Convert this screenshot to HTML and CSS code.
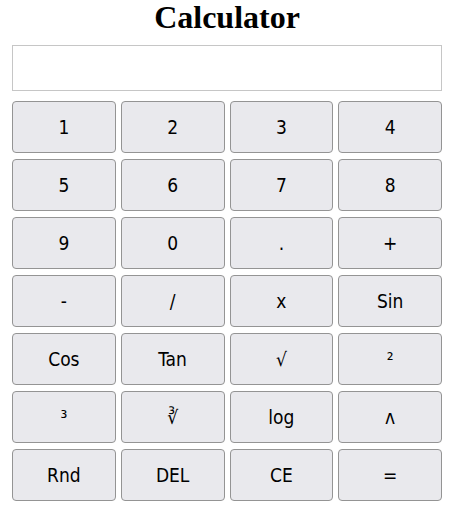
FILE: index.html
```html
<!DOCTYPE html>
<html>
<head>
<meta charset="utf-8">
<title>Calculator</title>
<link rel="stylesheet" href="styles.css">
</head>
<body>
<div class="calc">
  <h1 class="title">Calculator</h1>
  <input class="display" type="text">
  <div class="keys">
    <button class="key">1</button>
    <button class="key">2</button>
    <button class="key">3</button>
    <button class="key">4</button>
    <button class="key">5</button>
    <button class="key">6</button>
    <button class="key">7</button>
    <button class="key">8</button>
    <button class="key">9</button>
    <button class="key">0</button>
    <button class="key">.</button>
    <button class="key">+</button>
    <button class="key">-</button>
    <button class="key">/</button>
    <button class="key">x</button>
    <button class="key">Sin</button>
    <button class="key">Cos</button>
    <button class="key">Tan</button>
    <button class="key">√</button>
    <button class="key">²</button>
    <button class="key">³</button>
    <button class="key">∛</button>
    <button class="key">log</button>
    <button class="key">ʌ</button>
    <button class="key">Rnd</button>
    <button class="key">DEL</button>
    <button class="key">CE</button>
    <button class="key">=</button>
  </div>
</div>
</body>
</html>
```
FILE: styles.css
```css
html, body {
  margin: 0;
  padding: 0;
  background: #ffffff;
}

.calc {
  width: 430px;
  margin-left: 12px;
  padding-top: 1px;
}

.title {
  margin: 0;
  font-family: "Liberation Serif", "Times New Roman", serif;
  font-size: 32px;
  font-weight: bold;
  line-height: 32px;
  text-align: center;
  color: #000;
}

.display {
  display: block;
  box-sizing: border-box;
  width: 100%;
  height: 46px;
  margin: 12px 0 0;
  border: 1px solid #c6c6c6;
  padding: 0 8px;
  font-size: 20px;
  outline: none;
}

.keys {
  display: grid;
  grid-template-columns: repeat(4, 1fr);
  column-gap: 5px;
  row-gap: 6px;
  margin-top: 10px;
}

.key {
  box-sizing: border-box;
  height: 52px;
  margin: 0;
  padding: 0;
  background: #e9e9ed;
  border: 1px solid #949494;
  border-radius: 4px;
  color: #000;
  font-family: "DejaVu Sans Condensed", "DejaVu Sans", sans-serif;
  font-stretch: condensed;
  font-size: 19px;
}
```
